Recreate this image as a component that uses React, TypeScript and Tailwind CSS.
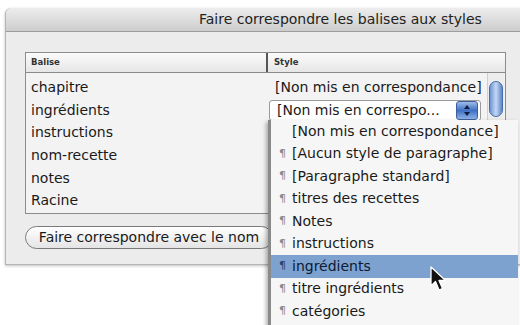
import React from 'react';

const tags = ['chapitre', 'ingrédients', 'instructions', 'nom-recette', 'notes', 'Racine'];

const menuItems = [
  { label: '[Non mis en correspondance]', pilcrow: false },
  { label: '[Aucun style de paragraphe]', pilcrow: true },
  { label: '[Paragraphe standard]', pilcrow: true },
  { label: 'titres des recettes', pilcrow: true },
  { label: 'Notes', pilcrow: true },
  { label: 'instructions', pilcrow: true },
  { label: 'ingrédients', pilcrow: true, active: true },
  { label: 'titre ingrédients', pilcrow: true },
  { label: 'catégories', pilcrow: true },
];

function Stepper() {
  return (
    <div className="w-[22px] h-[19px] rounded-[3px] bg-gradient-to-b from-[#9fbbe6] via-[#3f6fc4] to-[#8fb1e4] border border-[#3d5f9c] flex flex-col items-center justify-center gap-[3px]">
      <svg width="6" height="4" viewBox="0 0 6 4"><path d="M0 4 L3 0 L6 4 Z" fill="#0d1d3a" /></svg>
      <svg width="6" height="4" viewBox="0 0 6 4"><path d="M0 0 L3 4 L6 0 Z" fill="#0d1d3a" /></svg>
    </div>
  );
}

function Cursor() {
  return (
    <svg width="20" height="26" viewBox="0 0 20 26">
      <path d="M2 1 L2 20 L6.5 15.5 L10 24 L13.5 22.5 L10 14.5 L16.5 14.5 Z" fill="#111" stroke="#fff" strokeWidth="1.3" strokeLinejoin="round" />
    </svg>
  );
}

export default function App() {
  return (
    <div className="w-[520px] h-[325px] bg-white relative overflow-hidden text-[#1a1a1a]" style={{ fontFamily: '"DejaVu Sans", "Noto Sans", sans-serif' }}>
      {/* fenêtre */}
      <div className="ml-[5px] mt-[8px] w-[520px] bg-[#ececec] rounded-tl-[6px] border-l border-b border-[#b5b5b5] shadow-[0_1px_3px_rgba(0,0,0,0.25)]">
        <div className="h-[24px] rounded-tl-[6px] bg-gradient-to-b from-[#ededed] to-[#cdcdcd] border-b border-[#9d9d9d] flex items-center pl-[193px]">
          <span className="text-[14px] text-[#222] whitespace-nowrap">Faire correspondre les balises aux styles</span>
        </div>
        <div className="pt-[20px] pl-[19px] pb-[15px]">
          <div className="w-[481px] h-[162px] border border-[#8c8c8c] bg-[#f3f3f3] flex flex-col">
            <div className="h-[20px] flex border-b border-[#8a8a8a] bg-gradient-to-b from-[#fbfbfb] to-[#e6e6e6] text-[8.5px] font-bold text-[#333]">
              <div className="w-[242px] pl-[5px] flex items-center border-r-2 border-[#555]">Balise</div>
              <div className="pl-[6px] flex items-center">Style</div>
            </div>
            <div className="flex flex-1 pt-[3px]">
              <div className="w-[243px] flex flex-col">
                {tags.map((t) => (
                  <div key={t} className="h-[22.7px] pl-[5px] flex items-center text-[14px]">{t}</div>
                ))}
              </div>
              <div className="w-[218px] flex flex-col">
                <div className="h-[22.7px] pl-[6px] flex items-center text-[14px] whitespace-nowrap">[Non mis en correspondance]</div>
                <div className="h-[22.7px] flex items-center">
                  <div className="w-[212px] h-[21px] bg-white border border-[#9a9a9a] rounded-[3px] flex items-center justify-between pl-[7px] pr-[2px] text-[14px] whitespace-nowrap">
                    <span>[Non mis en correspo...</span>
                    <Stepper />
                  </div>
                </div>
              </div>
              <div className="w-[17px] flex flex-col items-center pt-[3px] bg-[#ededed] border-l border-[#cfcfcf] -mt-[3px]">
                <div className="w-[14px] h-[36px] mt-[5px] rounded-full bg-gradient-to-r from-[#6f95d4] via-[#c5d8f3] to-[#5d86cc] border border-[#466ea8]" />
              </div>
            </div>
          </div>
          <div className="mt-[12px] w-[248px] h-[23px] rounded-full border border-[#7a7a7a] bg-gradient-to-b from-white to-[#e4e4e4] flex items-center justify-center text-[14px] whitespace-nowrap shadow-[inset_0_1px_1px_rgba(255,255,255,0.8)]">
            Faire correspondre avec le nom
          </div>
        </div>
      </div>

      {/* menu déroulant */}
      <div className="absolute left-[268px] top-[120px] w-[250px] h-[220px] bg-[#f6f6f6] border-l-[3px] border-[#8a8a8a] shadow-[-2px_2px_4px_rgba(0,0,0,0.3)] flex flex-col">
        {menuItems.map((m) => (
          <div key={m.label} className={`h-[22.5px] flex items-center pl-[8px] text-[14px] whitespace-nowrap ${m.active ? 'bg-[#7ea2cf] text-[#0c1a33]' : ''}`}>
            <span className={`w-[13px] text-[11px] ${m.active ? 'text-[#28426b]' : 'text-[#8a8a8a]'}`}>{m.pilcrow ? '¶' : ''}</span>
            <span>{m.label}</span>
          </div>
        ))}
      </div>

      <div className="absolute left-[429px] top-[266px]">
        <Cursor />
      </div>
    </div>
  );
}
